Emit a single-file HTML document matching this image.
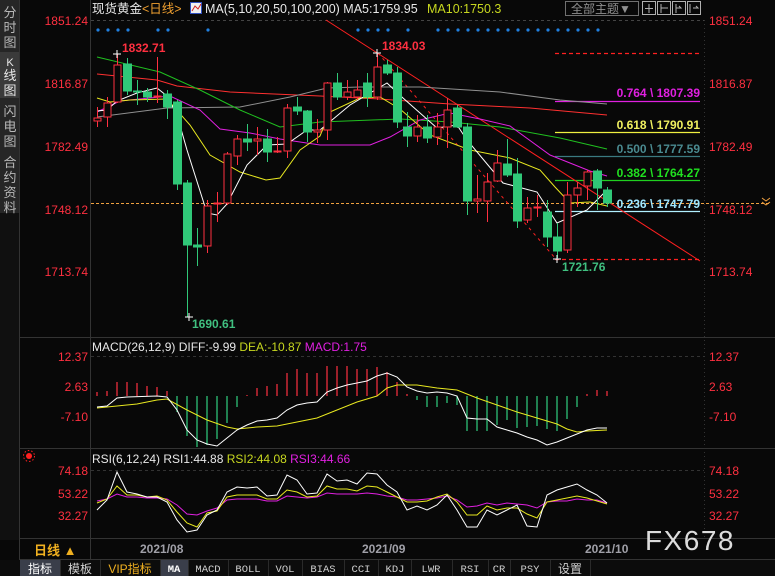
<!DOCTYPE html>
<html><head><meta charset="utf-8"><style>
body{margin:0;background:#080808;width:775px;height:576px;overflow:hidden;font-family:"Liberation Sans","Noto Sans CJK SC",sans-serif;}
svg{position:absolute;left:0;top:0}
</style></head><body>
<svg width="775" height="576" viewBox="0 0 775 576" xmlns="http://www.w3.org/2000/svg" font-family="Liberation Sans, Noto Sans CJK SC, sans-serif">
<rect width="775" height="576" fill="#080808"/>
<rect x="0" y="0" width="19" height="540" fill="#101010"/>
<rect x="0" y="0" width="19" height="213" fill="#262626"/>
<rect x="0" y="52" width="19" height="46" fill="#3a3a3a"/>
<g fill="#b8b8b8" font-size="13" text-anchor="middle">
<text x="10" y="17">分</text><text x="10" y="32">时</text><text x="10" y="47">图</text>
<text x="10" y="66" fill="#e8e8e8" font-size="11">K</text><text x="10" y="80" fill="#e8e8e8">线</text><text x="10" y="95" fill="#e8e8e8">图</text>
<text x="10" y="116">闪</text><text x="10" y="131">电</text><text x="10" y="146">图</text>
<text x="10" y="167">合</text><text x="10" y="182">约</text><text x="10" y="197">资</text><text x="10" y="212">料</text>
</g>
<line x1="19.5" y1="0" x2="19.5" y2="560" stroke="#333"/>
<line x1="90.5" y1="0" x2="90.5" y2="560" stroke="#333"/>
<line x1="704.5" y1="20" x2="704.5" y2="538" stroke="#333" stroke-dasharray="1,3"/>
<line x1="19" y1="337.5" x2="775" y2="337.5" stroke="#333"/>
<line x1="19" y1="448.5" x2="775" y2="448.5" stroke="#333"/>
<line x1="19" y1="538.5" x2="775" y2="538.5" stroke="#333"/>
<line x1="19" y1="559.5" x2="775" y2="559.5" stroke="#333"/>
<text x="92" y="13" fill="#e8e8e8" font-size="12.5">现货黄金</text>
<text x="142" y="13" fill="#f0a030" font-size="12.5">&lt;日线&gt;</text>
<rect x="190.5" y="2.5" width="11" height="11" fill="#f0f0f0" stroke="#3050c0"/>
<polyline points="192,11 195,6 198,9 201,4" fill="none" stroke="#d02020"/>
<text x="205" y="13" fill="#e8e8e8" font-size="12.5">MA(5,10,20,50,100,200) MA5:1759.95</text>
<text x="427" y="13" fill="#c8d820" font-size="12.5">MA10:1750.3</text>
<rect x="565.5" y="1.5" width="73" height="14" fill="none" stroke="#707070"/>
<text x="571" y="13" fill="#909090" font-size="12">全部主题▼</text>
<g fill="none" stroke="#b0b0b0">
<rect x="642.5" y="1.5" width="13" height="13"/><rect x="657.5" y="1.5" width="13" height="13"/><rect x="672.5" y="1.5" width="13" height="13"/><rect x="687.5" y="1.5" width="13" height="13"/>
<path d="M649 4v9M645 8.5h8M661 4v9M661 8h7M676 4v9M676 8l5 0l-2 -2M690 4v9M693 8h5l-2-2"/>
</g>
<g fill="#ff3040" font-size="12">
<text x="88" y="25" text-anchor="end">1851.24</text>
<text x="88" y="88" text-anchor="end">1816.87</text>
<text x="88" y="151" text-anchor="end">1782.49</text>
<text x="88" y="214" text-anchor="end">1748.12</text>
<text x="88" y="276" text-anchor="end">1713.74</text>
<text x="709" y="25">1851.24</text>
<text x="709" y="88">1816.87</text>
<text x="709" y="151">1782.49</text>
<text x="709" y="214">1748.12</text>
<text x="709" y="276">1713.74</text>
</g>
<line x1="91" y1="20.5" x2="704" y2="20.5" stroke="#444" stroke-dasharray="3,3"/>
<line x1="91" y1="203.5" x2="770" y2="203.5" stroke="#f0a040" stroke-dasharray="3,2"/>
<path d="M762 198l4 3l4-3M762 202l4 3l4-3" fill="none" stroke="#f0a040"/>
<g fill="#2080e0">
<circle cx="98" cy="30" r="1.6"/><circle cx="108" cy="30" r="1.6"/><circle cx="118" cy="30" r="1.6"/><circle cx="128" cy="30" r="1.6"/><circle cx="158" cy="30" r="1.6"/><circle cx="168" cy="30" r="1.6"/><circle cx="208" cy="30" r="1.6"/>
<circle cx="358" cy="30" r="1.6"/><circle cx="368" cy="30" r="1.6"/><circle cx="378" cy="30" r="1.6"/><circle cx="388" cy="30" r="1.6"/><circle cx="408" cy="30" r="1.6"/>
<circle cx="438" cy="30" r="1.6"/><circle cx="448" cy="30" r="1.6"/><circle cx="458" cy="30" r="1.6"/><circle cx="468" cy="30" r="1.6"/><circle cx="478" cy="30" r="1.6"/><circle cx="488" cy="30" r="1.6"/><circle cx="498" cy="30" r="1.6"/><circle cx="508" cy="30" r="1.6"/><circle cx="518" cy="30" r="1.6"/><circle cx="528" cy="30" r="1.6"/><circle cx="538" cy="30" r="1.6"/><circle cx="548" cy="30" r="1.6"/><circle cx="558" cy="30" r="1.6"/><circle cx="568" cy="30" r="1.6"/><circle cx="578" cy="30" r="1.6"/><circle cx="588" cy="30" r="1.6"/><circle cx="598" cy="30" r="1.6"/>
</g>
<g stroke-width="1.2">
<line x1="555" y1="53.5" x2="700" y2="53.5" stroke="#ff2020" stroke-dasharray="4,3"/>
<line x1="555" y1="101.5" x2="700" y2="101.5" stroke="#e020e0"/>
<line x1="555" y1="132.5" x2="700" y2="132.5" stroke="#f0f040"/>
<line x1="555" y1="156.5" x2="700" y2="156.5" stroke="#3a7a80"/>
<line x1="555" y1="180.5" x2="700" y2="180.5" stroke="#20d020"/>
<line x1="555" y1="211.5" x2="700" y2="211.5" stroke="#b0f0ff"/>
<line x1="555" y1="259.5" x2="700" y2="259.5" stroke="#ff2020" stroke-dasharray="4,3"/>
</g>
<g font-size="12" font-weight="bold" text-anchor="end">
<text x="700" y="97" fill="#e020e0">0.764 \ 1807.39</text>
<text x="700" y="129" fill="#f0f060">0.618 \ 1790.91</text>
<text x="700" y="153" fill="#4a8a90">0.500 \ 1777.59</text>
<text x="700" y="177" fill="#20e020">0.382 \ 1764.27</text>
<text x="700" y="208" fill="#a0e8ff">0.236 \ 1747.79</text>
</g>
<line x1="326" y1="20" x2="700" y2="261" stroke="#ff2020"/>
<line x1="378" y1="53" x2="555" y2="258" stroke="#ff2020" stroke-dasharray="3,4"/>
<g fill="none" stroke-width="1">
<polyline stroke="#ff3030" points="97,74 157,80 177,86 230,92 320,96 380,99 450,104 530,108 607,115"/>
<polyline stroke="#909090" points="97,117 167,108 240,107 290,97 327,88 360,87 420,87 500,92 560,100 607,104"/>
<polyline stroke="#20c020" points="97,57 160,72 200,90 240,110 280,127 320,122 400,119 450,122 500,127 560,138 607,149"/>
<polyline stroke="#e020e0" points="97,112 120,101 170,96 200,110 220,129 250,133 280,139 320,145 370,145 390,137 420,120 450,113 480,119 510,126 550,155 590,171 607,176"/>
<polyline stroke="#e8e820" points="97,98 110,102 130,100 167,99 190,125 210,155 240,172 266,180 280,178 300,150 320,136 330,112 360,98 380,97 400,109 430,135 470,150 510,158 540,170 555,187 570,203 590,202 607,206"/>
<polyline stroke="#ffffff" points="97,111 107,110 117,101 137,93 157,88 167,96 177,115 187,150 207,213 217,215 227,204 247,165 267,145 287,144 307,130 320,130 350,105 387,83 403,98 437,128 457,125 467,140 503,183 537,192 557,223 587,210 607,190"/>
</g>
<g stroke-width="1">
<g stroke="#ff3040" fill="#080808">
<line x1="97.5" y1="107" x2="97.5" y2="127"/><rect x="94" y="118" width="7" height="3"/>
<line x1="107.5" y1="97" x2="107.5" y2="127"/><rect x="104" y="103" width="7" height="14"/>
<line x1="117.5" y1="54" x2="117.5" y2="103"/><rect x="114" y="65" width="7" height="37"/>
<line x1="157.5" y1="57" x2="157.5" y2="103"/><rect x="154" y="96" width="7" height="1"/>
<line x1="207.5" y1="200" x2="207.5" y2="253"/><rect x="204" y="206" width="7" height="40"/>
<line x1="217.5" y1="192" x2="217.5" y2="222"/><rect x="214" y="203" width="7" height="1"/>
<line x1="227.5" y1="152" x2="227.5" y2="205"/><rect x="224" y="154" width="7" height="49"/>
<line x1="237.5" y1="135" x2="237.5" y2="165"/><rect x="234" y="139" width="7" height="17"/>
<line x1="257.5" y1="127" x2="257.5" y2="155"/><rect x="254" y="139" width="7" height="2"/>
<line x1="277.5" y1="137" x2="277.5" y2="153"/><rect x="274" y="151" width="7" height="1"/>
<line x1="287.5" y1="104" x2="287.5" y2="158"/><rect x="284" y="108" width="7" height="43"/>
<line x1="317.5" y1="119" x2="317.5" y2="143"/><rect x="314" y="130" width="7" height="2"/>
<line x1="327.5" y1="82" x2="327.5" y2="140"/><rect x="324" y="83" width="7" height="47"/>
<line x1="347.5" y1="80" x2="347.5" y2="100"/><rect x="344" y="92" width="7" height="5"/>
<line x1="357.5" y1="80" x2="357.5" y2="100"/><rect x="354" y="90" width="7" height="7"/>
<line x1="377.5" y1="53" x2="377.5" y2="100"/><rect x="374" y="67" width="7" height="30"/>
<line x1="417.5" y1="115" x2="417.5" y2="142"/><rect x="414" y="127" width="7" height="9"/>
<line x1="437.5" y1="113" x2="437.5" y2="145"/><rect x="434" y="127" width="7" height="10"/>
<line x1="447.5" y1="98" x2="447.5" y2="148"/><rect x="444" y="110" width="7" height="17"/>
<line x1="477.5" y1="175" x2="477.5" y2="213"/><rect x="474" y="199" width="7" height="2"/>
<line x1="487.5" y1="173" x2="487.5" y2="222"/><rect x="484" y="182" width="7" height="19"/>
<line x1="497.5" y1="150" x2="497.5" y2="182"/><rect x="494" y="163" width="7" height="18"/>
<line x1="527.5" y1="197" x2="527.5" y2="223"/><rect x="524" y="208" width="7" height="12"/>
<line x1="537.5" y1="195" x2="537.5" y2="217"/><rect x="534" y="207" width="7" height="1"/>
<line x1="567.5" y1="182" x2="567.5" y2="253"/><rect x="564" y="195" width="7" height="55"/>
<line x1="577.5" y1="182" x2="577.5" y2="207"/><rect x="574" y="188" width="7" height="7"/>
<line x1="587.5" y1="170" x2="587.5" y2="200"/><rect x="584" y="172" width="7" height="14"/>
</g>
<g stroke="#30c878" fill="#30c878">
<line x1="127.5" y1="58" x2="127.5" y2="95"/><rect x="123.5" y="64" width="8" height="27"/>
<line x1="137.5" y1="80" x2="137.5" y2="105"/><rect x="133.5" y="91" width="8" height="1"/>
<line x1="147.5" y1="88" x2="147.5" y2="102"/><rect x="143.5" y="92" width="8" height="5"/>
<line x1="167.5" y1="90" x2="167.5" y2="119"/><rect x="163.5" y="94" width="8" height="13"/>
<line x1="177.5" y1="100" x2="177.5" y2="190"/><rect x="173.5" y="102" width="8" height="82"/>
<line x1="187.5" y1="180" x2="187.5" y2="317"/><rect x="183.5" y="183" width="8" height="62"/>
<line x1="197.5" y1="228" x2="197.5" y2="266"/><rect x="193.5" y="245" width="8" height="2"/>
<line x1="247.5" y1="124" x2="247.5" y2="151"/><rect x="243.5" y="139" width="8" height="3"/>
<line x1="267.5" y1="129" x2="267.5" y2="162"/><rect x="263.5" y="139" width="8" height="13"/>
<line x1="297.5" y1="97" x2="297.5" y2="115"/><rect x="293.5" y="107" width="8" height="4"/>
<line x1="307.5" y1="110" x2="307.5" y2="142"/><rect x="303.5" y="111" width="8" height="21"/>
<line x1="337.5" y1="73" x2="337.5" y2="100"/><rect x="333.5" y="83" width="8" height="14"/>
<line x1="367.5" y1="73" x2="367.5" y2="107"/><rect x="363.5" y="83" width="8" height="14"/>
<line x1="387.5" y1="60" x2="387.5" y2="75"/><rect x="383.5" y="65" width="8" height="8"/>
<line x1="397.5" y1="67" x2="397.5" y2="128"/><rect x="393.5" y="73" width="8" height="49"/>
<line x1="407.5" y1="112" x2="407.5" y2="147"/><rect x="403.5" y="127" width="8" height="9"/>
<line x1="427.5" y1="115" x2="427.5" y2="143"/><rect x="423.5" y="127" width="8" height="11"/>
<line x1="457.5" y1="105" x2="457.5" y2="128"/><rect x="453.5" y="108" width="8" height="19"/>
<line x1="467.5" y1="123" x2="467.5" y2="215"/><rect x="463.5" y="127" width="8" height="74"/>
<line x1="507.5" y1="139" x2="507.5" y2="177"/><rect x="503.5" y="164" width="8" height="11"/>
<line x1="517.5" y1="158" x2="517.5" y2="228"/><rect x="513.5" y="174" width="8" height="47"/>
<line x1="547.5" y1="200" x2="547.5" y2="247"/><rect x="543.5" y="212" width="8" height="25"/>
<line x1="557.5" y1="223" x2="557.5" y2="258"/><rect x="553.5" y="237" width="8" height="14"/>
<line x1="597.5" y1="169" x2="597.5" y2="210"/><rect x="593.5" y="171" width="8" height="17"/>
<line x1="607.5" y1="187" x2="607.5" y2="207"/><rect x="603.5" y="190" width="8" height="13"/>
</g>
</g>
<g stroke="#fff"><path d="M113 54h8M117 50v8M185 317h8M189 313v8M373 53h8M377 49v8M553 259h8M557 255v8"/></g>
<g font-size="12" font-weight="bold">
<text x="122" y="52" fill="#ff3040">1832.71</text>
<text x="382" y="50" fill="#ff3040">1834.03</text>
<text x="192" y="328" fill="#40c080">1690.61</text>
<text x="562" y="271" fill="#40c080">1721.76</text>
</g>
<text x="92" y="351" font-size="12" fill="#e8e8e8">MACD(26,12,9) DIFF:-9.99 <tspan fill="#c8d820">DEA:-10.87</tspan> <tspan fill="#e020e0">MACD:1.75</tspan></text>
<g fill="#ff3040" font-size="12">
<text x="88" y="361" text-anchor="end">12.37</text><text x="88" y="391" text-anchor="end">2.63</text><text x="88" y="421" text-anchor="end">-7.10</text>
<text x="709" y="361">12.37</text><text x="709" y="391">2.63</text><text x="709" y="421">-7.10</text>
</g>
<line x1="91" y1="356.5" x2="704" y2="356.5" stroke="#333" stroke-dasharray="3,3"/>
<g stroke="#ff3040" stroke-width="1.2">
<path d="M97 396V392M107 396V391M117 396V382M127 396V382M137 396V383M147 396V386M157 396V387M167 396V391M247 396V395M257 396V388M267 396V386M277 396V384M287 396V373M297 396V369M307 396V373M317 396V373M327 396V366M337 396V366M347 396V366M357 396V369M367 396V369M377 396V367M387 396V372M397 396V382M407 396V394M587 396V394M597 396V390M607 396V391"/>
</g>
<g stroke="#30d080" stroke-width="1.2">
<path d="M177 396V412M187 396V436M197 396V447M207 396V445M217 396V439M227 396V423M237 396V407M417 396V400M427 396V407M437 396V407M447 396V403M457 396V405M467 396V431M477 396V431M487 396V431M497 396V425M507 396V420M517 396V428M527 396V427M537 396V426M547 396V429M557 396V431M567 396V419M577 396V407"/>
</g>
<polyline fill="none" stroke="#e8e820" points="97,408 117,406 137,404 157,400 167,399 187,410 207,420 227,427 237,429 257,427 277,426 297,422 317,418 337,410 357,402 377,396 387,388 397,385 417,385 437,388 457,390 477,398 497,405 517,412 537,418 557,424 567,429 577,432 587,431 607,430"/>
<polyline fill="none" stroke="#ffffff" points="97,407 107,406 117,398 127,397 157,396 167,397 177,410 187,430 197,440 207,444 217,446 227,438 237,430 247,425 257,421 267,420 277,418 287,410 297,405 307,403 317,402 327,392 337,388 347,385 357,383 367,381 377,376 387,373 397,377 407,387 417,391 427,393 437,392 447,393 457,396 467,418 477,419 487,419 497,427 507,430 517,433 527,437 537,440 547,445 557,442 567,438 577,434 587,430 597,428 607,428"/>
<circle cx="29" cy="456" r="3" fill="#ff2020"/><circle cx="29" cy="456" r="5.5" fill="none" stroke="#ff2020" stroke-dasharray="1.5,2"/>
<text x="92" y="463" font-size="12" fill="#e8e8e8">RSI(6,12,24) RSI1:44.88 <tspan fill="#c8d820">RSI2:44.08</tspan> <tspan fill="#e020e0">RSI3:44.66</tspan></text>
<g fill="#ff3040" font-size="12">
<text x="88" y="475" text-anchor="end">74.18</text><text x="88" y="498" text-anchor="end">53.22</text><text x="88" y="520" text-anchor="end">32.27</text>
<text x="709" y="475">74.18</text><text x="709" y="498">53.22</text><text x="709" y="520">32.27</text>
</g>
<line x1="91" y1="470.5" x2="704" y2="470.5" stroke="#333" stroke-dasharray="3,3"/>
<polyline fill="none" stroke="#e020e0" points="97,501 107,499 117,494 127,497 137,497 147,498 157,498 167,499 177,505 187,514 197,515 207,511 217,508 227,500 237,499 247,499 257,499 267,501 277,501 287,496 297,497 307,498 317,497 327,493 337,494 347,494 357,494 367,493 377,494 387,496 397,497 407,500 417,500 427,499 437,498 447,496 457,500 467,507 477,506 487,503 497,505 507,503 517,504 527,505 537,508 547,502 557,501 567,501 577,499 587,500 597,500 607,503"/>
<polyline fill="none" stroke="#e8e820" points="97,503 107,499 117,486 127,495 137,495 147,497 157,496 167,500 177,512 187,523 197,527 207,513 217,511 227,497 237,495 247,495 257,495 267,499 277,499 287,490 297,492 307,497 317,496 327,486 337,489 347,489 357,491 367,486 377,487 387,492 397,497 407,502 417,502 427,501 437,497 447,494 457,502 467,515 477,515 487,506 497,510 507,508 517,508 527,514 537,518 547,502 557,500 567,498 577,496 587,498 597,501 607,504"/>
<polyline fill="none" stroke="#ffffff" points="97,510 107,500 117,472 127,492 137,494 147,497 157,497 167,502 177,520 187,532 197,530 207,515 217,510 227,492 237,487 247,488 257,487 267,496 277,495 287,475 297,480 307,494 317,493 327,474 337,481 347,480 357,484 367,473 377,474 387,485 397,492 407,510 417,506 427,510 437,505 447,495 457,510 467,527 477,527 487,510 497,515 507,510 517,505 527,526 537,527 547,495 557,490 567,487 577,484 587,490 597,495 607,503"/>
<text x="140" y="553" fill="#a0a0a8" font-size="12" font-weight="bold">2021/08</text>
<text x="362" y="553" fill="#a0a0a8" font-size="12" font-weight="bold">2021/09</text>
<text x="585" y="553" fill="#a0a0a8" font-size="12" font-weight="bold">2021/10</text>
<text x="34" y="555" fill="#f0b020" font-size="13" font-weight="bold">日线 ▲</text>
<text x="645" y="550" fill="#dcdcdc" font-size="28" letter-spacing="1.5">FX678</text>
<rect x="0" y="560" width="775" height="16" fill="#0c0c0c"/>
<rect x="20" y="560" width="40" height="16" fill="#3a3e4a"/>
<rect x="160" y="560" width="28" height="16" fill="#3a3e4a"/>
<g stroke="#2a2a2a"><path d="M60.5 560v16M100.5 560v16M160.5 560v16M188.5 560v16M228.5 560v16M268.5 560v16M302.5 560v16M344.5 560v16M378.5 560v16M411.5 560v16M452.5 560v16M488.5 560v16M510.5 560v16M550.5 560v16M590.5 560v16"/></g>
<g font-size="12" fill="#d0d0d0" text-anchor="middle">
<text x="40" y="573" fill="#fff">指标</text><text x="80" y="573">模板</text><text x="130" y="573" fill="#f0b020">VIP指标</text><text x="570" y="573">设置</text>
</g>
<g font-size="10.5" fill="#d0d0d0" text-anchor="middle" font-family="Liberation Mono, monospace">
<text x="174" y="572" fill="#fff" font-weight="bold">MA</text><text x="208" y="572">MACD</text><text x="248" y="572">BOLL</text><text x="285" y="572">VOL</text><text x="323" y="572">BIAS</text><text x="361" y="572">CCI</text><text x="395" y="572">KDJ</text><text x="431" y="572">LWR</text><text x="470" y="572">RSI</text><text x="499" y="572">CR</text><text x="530" y="572">PSY</text>
</g>
</svg>
</body></html>
